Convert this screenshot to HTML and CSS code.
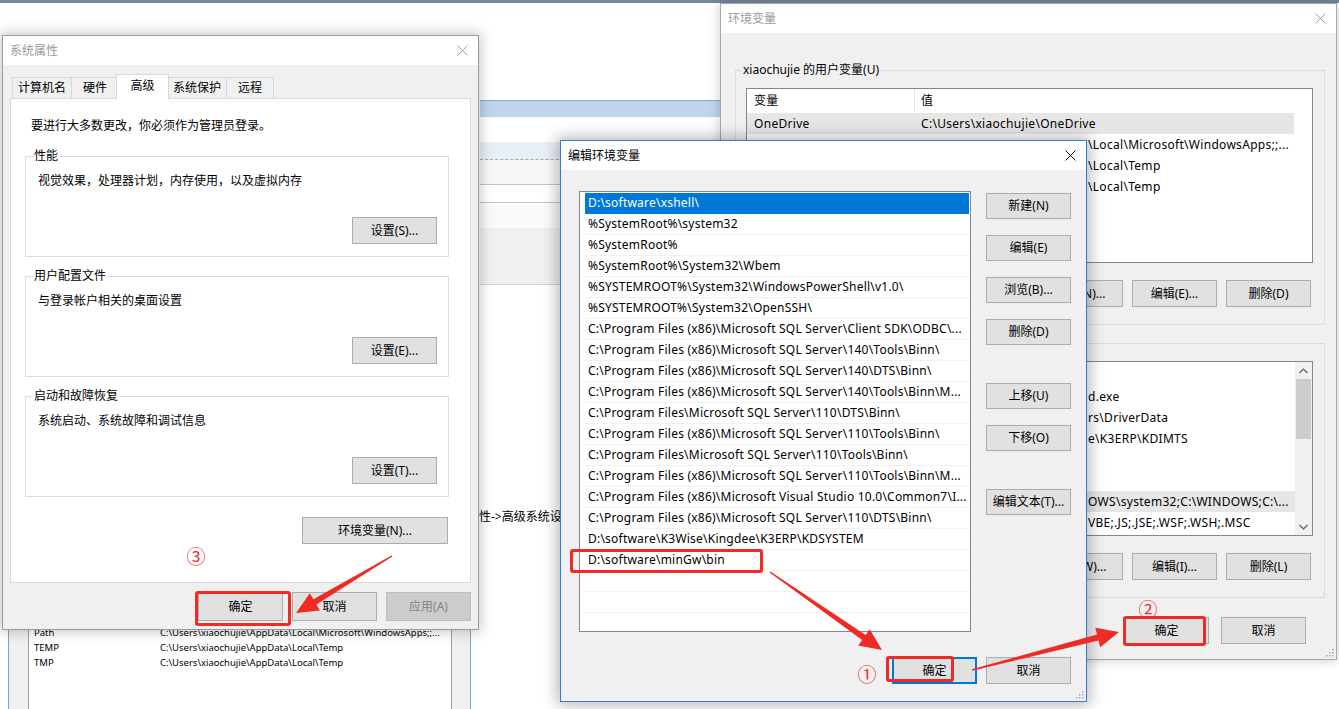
FILE: index.html
```html
<!DOCTYPE html>
<html lang="zh-CN">
<head>
<meta charset="utf-8">
<title>环境变量</title>
<link rel="stylesheet" href="styles.css">
</head>
<body>
<div class="desk">

  <!-- background window behind everything -->
  <div class="bgwin">
    <div class="bg-col">
      <div class="bs bs-white1"></div>
      <div class="bs bs-sel"></div>
      <div class="bs bs-white2"></div>
      <div class="bs bs-hl"></div>
      <div class="bs bs-r1"></div>
      <div class="bs bs-r2"></div>
      <div class="bs bs-r3"></div>
      <div class="bs bs-grey"></div>
      <div class="bs bs-white3"><span class="bg-path">性-&gt;高级系统设</span></div>
    </div>
  </div>

  <!-- background env window (bottom left) -->
  <div class="bgenv">
    <div class="bg-list">
      <div class="bg-row"></div>
      <div class="bg-row"><span class="bg-name">Path</span><span>C:\Users\xiaochujie\AppData\Local\Microsoft\WindowsApps;;...</span></div>
      <div class="bg-row"><span class="bg-name">TEMP</span><span>C:\Users\xiaochujie\AppData\Local\Temp</span></div>
      <div class="bg-row"><span class="bg-name">TMP</span><span>C:\Users\xiaochujie\AppData\Local\Temp</span></div>
    </div>
  </div>

  <!-- 系统属性 -->
  <div class="win win-sys">
    <div class="tb">
      <span class="tb-title dim">系统属性</span>
      <svg class="xicon dim" width="11" height="11" viewBox="0 0 11 11"><path d="M0.5 0.5L10.5 10.5M10.5 0.5L0.5 10.5" stroke="currentColor" stroke-width="1"/></svg>
    </div>
    <div class="sys-body">
      <div class="tabs">
        <div class="tab">计算机名</div>
        <div class="tab">硬件</div>
        <div class="tab sel">高级</div>
        <div class="tab">系统保护</div>
        <div class="tab">远程</div>
      </div>
      <div class="panel">
        <p class="note">要进行大多数更改，你必须作为管理员登录。</p>
        <fieldset class="grp">
          <legend>性能</legend>
          <p class="grp-text">视觉效果，处理器计划，内存使用，以及虚拟内存</p>
          <div class="grp-act"><button class="btn">设置(S)...</button></div>
        </fieldset>
        <fieldset class="grp">
          <legend>用户配置文件</legend>
          <p class="grp-text">与登录帐户相关的桌面设置</p>
          <div class="grp-act"><button class="btn">设置(E)...</button></div>
        </fieldset>
        <fieldset class="grp">
          <legend>启动和故障恢复</legend>
          <p class="grp-text">系统启动、系统故障和调试信息</p>
          <div class="grp-act"><button class="btn">设置(T)...</button></div>
        </fieldset>
        <div class="env-act"><button class="btn btn-env">环境变量(N)...</button></div>
      </div>
      <div class="foot foot-sys">
        <button class="btn btn-foot">确定</button>
        <button class="btn btn-foot">取消</button>
        <button class="btn btn-foot" disabled>应用(A)</button>
      </div>
    </div>
  </div>

  <!-- 环境变量 -->
  <div class="win win-env">
    <div class="tb">
      <span class="tb-title dim">环境变量</span>
      <svg class="xicon dim" width="11" height="11" viewBox="0 0 11 11"><path d="M0.5 0.5L10.5 10.5M10.5 0.5L0.5 10.5" stroke="currentColor" stroke-width="1"/></svg>
    </div>
    <div class="env-body">
      <fieldset class="grp grp-env">
        <legend>xiaochujie 的用户变量(U)</legend>
        <div class="lv">
          <div class="lv-main">
            <div class="lv-head"><span class="c-name">变量</span><span class="c-val">值</span></div>
            <div class="lv-row hl"><span class="c-name">OneDrive</span><span class="c-val">C:\Users\xiaochujie\OneDrive</span></div>
            <div class="lv-row"><span class="tail">\Local\Microsoft\WindowsApps;;...</span></div>
            <div class="lv-row"><span class="tail">\Local\Temp</span></div>
            <div class="lv-row"><span class="tail">\Local\Temp</span></div>
          </div>
        </div>
        <div class="grp-btns">
          <button class="btn btn-foot">新建(N)...</button>
          <button class="btn btn-foot">编辑(E)...</button>
          <button class="btn btn-foot">删除(D)</button>
        </div>
      </fieldset>
      <fieldset class="grp grp-env grp-sys">
        <div class="lv">
          <div class="lv-main">
            <div class="lv-head"></div>
            <div class="lv-row"><span class="tail">d.exe</span></div>
            <div class="lv-row"><span class="tail">rs\DriverData</span></div>
            <div class="lv-row"><span class="tail">e\K3ERP\KDIMTS</span></div>
            <div class="lv-row"></div>
            <div class="lv-row"></div>
            <div class="lv-row hl"><span class="tail">OWS\system32;C:\WINDOWS;C:\...</span></div>
            <div class="lv-row"><span class="tail">VBE;.JS;.JSE;.WSF;.WSH;.MSC</span></div>
          </div>
          <div class="sb">
            <div class="sb-btn"><svg width="9" height="6" viewBox="0 0 9 6"><path d="M0.5 5L4.5 1L8.5 5" fill="none" stroke="#606060" stroke-width="1.2"/></svg></div>
            <div class="sb-thumb"></div>
            <div class="sb-track"></div>
            <div class="sb-btn"><svg width="9" height="6" viewBox="0 0 9 6"><path d="M0.5 1L4.5 5L8.5 1" fill="none" stroke="#606060" stroke-width="1.2"/></svg></div>
          </div>
        </div>
        <div class="grp-btns">
          <button class="btn btn-foot">新建(W)...</button>
          <button class="btn btn-foot">编辑(I)...</button>
          <button class="btn btn-foot">删除(L)</button>
        </div>
      </fieldset>
      <div class="foot foot-env">
        <button class="btn btn-foot">确定</button>
        <button class="btn btn-foot">取消</button>
      </div>
    </div>
    <svg class="grip" width="10" height="10" viewBox="0 0 10 10"><g fill="#a8a8a8"><rect x="8" y="2" width="1.5" height="1.5"/><rect x="8" y="5" width="1.5" height="1.5"/><rect x="5" y="5" width="1.5" height="1.5"/><rect x="8" y="8" width="1.5" height="1.5"/><rect x="5" y="8" width="1.5" height="1.5"/><rect x="2" y="8" width="1.5" height="1.5"/></g></svg>
  </div>

  <!-- 编辑环境变量 -->
  <div class="win win-edit">
    <div class="tb">
      <span class="tb-title">编辑环境变量</span>
      <svg class="xicon" width="11" height="11" viewBox="0 0 11 11"><path d="M0.5 0.5L10.5 10.5M10.5 0.5L0.5 10.5" stroke="currentColor" stroke-width="1"/></svg>
    </div>
    <div class="edit-body">
      <div class="edit-main">
        <div class="plist">
          <div class="pitem sel">D:\software\xshell\</div>
          <div class="pitem">%SystemRoot%\system32</div>
          <div class="pitem">%SystemRoot%</div>
          <div class="pitem">%SystemRoot%\System32\Wbem</div>
          <div class="pitem">%SYSTEMROOT%\System32\WindowsPowerShell\v1.0\</div>
          <div class="pitem">%SYSTEMROOT%\System32\OpenSSH\</div>
          <div class="pitem">C:\Program Files (x86)\Microsoft SQL Server\Client SDK\ODBC\...</div>
          <div class="pitem">C:\Program Files (x86)\Microsoft SQL Server\140\Tools\Binn\</div>
          <div class="pitem">C:\Program Files (x86)\Microsoft SQL Server\140\DTS\Binn\</div>
          <div class="pitem">C:\Program Files (x86)\Microsoft SQL Server\140\Tools\Binn\M...</div>
          <div class="pitem">C:\Program Files\Microsoft SQL Server\110\DTS\Binn\</div>
          <div class="pitem">C:\Program Files (x86)\Microsoft SQL Server\110\Tools\Binn\</div>
          <div class="pitem">C:\Program Files\Microsoft SQL Server\110\Tools\Binn\</div>
          <div class="pitem">C:\Program Files (x86)\Microsoft SQL Server\110\Tools\Binn\M...</div>
          <div class="pitem">C:\Program Files (x86)\Microsoft Visual Studio 10.0\Common7\I...</div>
          <div class="pitem">C:\Program Files (x86)\Microsoft SQL Server\110\DTS\Binn\</div>
          <div class="pitem">D:\software\K3Wise\Kingdee\K3ERP\KDSYSTEM</div>
          <div class="pitem">D:\software\minGw\bin</div>
          <div class="pitem"></div>
          <div class="pitem"></div>
          <div class="pitem"></div>
        </div>
        <div class="side">
          <button class="btn">新建(N)</button>
          <button class="btn gap-s">编辑(E)</button>
          <button class="btn gap-s">浏览(B)...</button>
          <button class="btn gap-s">删除(D)</button>
          <button class="btn gap-l">上移(U)</button>
          <button class="btn gap-s">下移(O)</button>
          <button class="btn gap-l">编辑文本(T)...</button>
        </div>
      </div>
      <div class="foot foot-edit">
        <button class="btn btn-foot btn-def">确定</button>
        <button class="btn btn-foot">取消</button>
      </div>
    </div>
    <svg class="grip" width="10" height="10" viewBox="0 0 10 10"><g fill="#a8a8a8"><rect x="8" y="2" width="1.5" height="1.5"/><rect x="8" y="5" width="1.5" height="1.5"/><rect x="5" y="5" width="1.5" height="1.5"/><rect x="8" y="8" width="1.5" height="1.5"/><rect x="5" y="8" width="1.5" height="1.5"/><rect x="2" y="8" width="1.5" height="1.5"/></g></svg>
  </div>

  <!-- annotations -->
  <svg class="arrows" width="1339" height="709" viewBox="0 0 1339 709">
    <g fill="#ee2b24">
      <polygon points="391.6,555.4 313.4,599.2 309.8,593.2 296,613 320.0,610.4 316.4,604.4 392.4,556.6"/>
      <polygon points="769.6,572.6 862.2,639.9 858.2,645.6 882,650 869.7,629.2 865.7,635.0 770.4,571.4"/>
      <polygon points="972.2,670.7 1098.5,640.4 1100.2,647.2 1119,632 1095.2,627.8 1097.0,634.6 971.8,669.3"/>
    </g>
  </svg>
  <div class="mark mark-sys"></div>
  <div class="mark mark-path"></div>
  <div class="mark mark-edit"></div>
  <div class="mark mark-env"></div>
  <span class="num num3">③</span>
  <span class="num num1">①</span>
  <span class="num num2">②</span>
</div>
</body>
</html>
```

FILE: styles.css
```css
* { box-sizing: border-box; }

html, body {
  margin: 0;
  padding: 0;
}

body {
  width: 1339px;
  height: 709px;
  overflow: hidden;
  background: #ffffff;
  font-family: "Noto Sans", "Noto Sans CJK SC", sans-serif;
  font-size: 12px;
  line-height: 16px;
  color: #000000;
}

.desk {
  position: relative;
  width: 1339px;
  height: 709px;
  overflow: hidden;
}

/* ---------- background window ---------- */
.bgwin {
  position: absolute;
  left: 0;
  top: 0;
  width: 1339px;
  height: 709px;
  border-top: 3px solid #76869f;
  background: #ffffff;
  padding-left: 480px;
}

.bg-col {
  width: 240px;
  display: flex;
  flex-direction: column;
}

.bs { flex: none; }
.bs-white1 { height: 97px; background: #ffffff; }
.bs-sel { height: 17px; background: #c0d4ed; border-top: 1px solid #8ea8cb; }
.bs-white2 { height: 25px; background: #ffffff; }
.bs-hl { height: 18px; background: #e9eff8; border-bottom: 1px dashed #a9a9a9; }
.bs-r1 { height: 25px; background: #f8f8f8; border-bottom: 1px solid #c4c4c4; }
.bs-r2 { height: 18px; background: #ffffff; border-bottom: 1px solid #c4c4c4; }
.bs-r3 { height: 25px; background: #fafafa; }
.bs-grey { height: 57px; background: #f0f0f0; border-bottom: 1px solid #d2d2d2; }
.bs-white3 { height: 424px; background: #ffffff; padding-top: 224px; }

.bg-path {
  display: block;
  white-space: nowrap;
  font-size: 12px;
  margin-left: -1px;
}

.bgenv {
  position: absolute;
  left: 8px;
  top: 601px;
  width: 463px;
  height: 120px;
  background: #f0f0f0;
  border-left: 1px solid #7fa3cf;
  border-right: 1px solid #7fa3cf;
  padding: 8px 0 0 19px;
}

.bg-list {
  width: 424px;
  height: 120px;
  background: #ffffff;
  border: 1px solid #a0a0a0;
  font-size: 9.5px;
  line-height: 15px;
}

.bg-row {
  display: flex;
  white-space: nowrap;
  height: 15px;
}

.bg-name {
  width: 131px;
  padding-left: 5px;
  flex: none;
}

/* ---------- windows ---------- */
.win {
  position: absolute;
  background: #f0f0f0;
  display: flex;
  flex-direction: column;
}

.tb {
  flex: none;
  height: 29px;
  background: #ffffff;
  display: flex;
  align-items: center;
  justify-content: space-between;
  padding: 0 10px 0 7px;
}

.tb-title { white-space: nowrap; }
.dim { color: #9a9a9a; }
.xicon { color: #111111; flex: none; }
.xicon.dim { color: #a0a0a0; }

.grip {
  position: absolute;
  right: 2px;
  bottom: 2px;
}

/* buttons */
.btn {
  font-family: inherit;
  font-size: 12px;
  line-height: 16px;
  color: #000000;
  background: #e1e1e1;
  border: 1px solid #adadad;
  height: 27px;
  width: 85px;
  padding: 0;
  margin: 0;
  white-space: nowrap;
  flex: none;
}

.btn:disabled {
  background: #cccccc;
  border-color: #bfbfbf;
  color: #838383;
}

.btn-def {
  border: 2px solid #0078d7;
}

.foot {
  display: flex;
  justify-content: flex-end;
  flex: none;
}

/* ---------- 系统属性 ---------- */
.win-sys {
  left: 2px;
  top: 35px;
  width: 477px;
  height: 595px;
  border: 1px solid #9b9b9b;
  box-shadow: 0 0 12px 2px rgba(0, 0, 0, 0.22);
}

.sys-body {
  flex: 1;
  display: flex;
  flex-direction: column;
  padding: 9px 7px 0 7px;
}

.tabs {
  display: flex;
  align-items: flex-end;
  height: 24px;
  margin-left: 2px;
  position: relative;
  z-index: 1;
}

.tab {
  height: 21px;
  min-width: 48px;
  padding: 0 5px;
  line-height: 20px;
  text-align: center;
  border: 1px solid #d9d9d9;
  border-bottom: none;
  margin-right: -1px;
  background: #f0f0f0;
  white-space: nowrap;
}

.tab.sel {
  height: 25px;
  min-width: 53px;
  line-height: 21px;
  background: #ffffff;
  margin: 0 -2px -1px -2px;
  position: relative;
  z-index: 2;
}

.panel {
  height: 485px;
  background: #ffffff;
  border: 1px solid #d9d9d9;
  padding: 19px 21px 0 14px;
  flex: none;
}

.note {
  margin: 0 0 0 6px;
}

.grp {
  margin: 14px 0 0 0;
  border: 1px solid #dcdcdc;
  padding: 0 11px 12px 12px;
  min-width: 0;
}

.grp + .grp { margin-top: 11px; }

.grp legend {
  padding: 0 1px;
  margin-left: -5px;
  line-height: 16px;
  white-space: nowrap;
}

.grp-text {
  margin: 9px 0 0 0;
}

.grp-act {
  display: flex;
  justify-content: flex-end;
  margin-top: 28px;
}

.env-act {
  display: flex;
  justify-content: flex-end;
  margin-top: 20px;
  padding-right: 1px;
}

.btn-env { width: 146px; }

.foot-sys {
  margin-top: 9px;
  gap: 9px;
}

.btn-foot { width: 85px; }
.foot-sys .btn-foot { height: 29px; }

/* ---------- 环境变量 ---------- */
.win-env {
  left: 720px;
  top: 3px;
  width: 617px;
  height: 657px;
  border: 1px solid #a7a7a7;
  box-shadow: 0 0 10px 1px rgba(0, 0, 0, 0.18);
}

.env-body {
  flex: 1;
  display: flex;
  flex-direction: column;
  padding: 29px 11px 0 14px;
}

.grp-env {
  margin: 0;
  padding: 0 11px 17px 10px;
}

.grp-env legend { margin-left: -4px; }

.grp-env + .grp-sys { margin-top: 18px; }

.lv {
  margin-top: 10px;
  height: 175px;
  background: #ffffff;
  border: 1px solid #828790;
  display: flex;
  overflow: hidden;
  letter-spacing: 0.3px;
}

.grp-sys .lv { margin-top: 17px; }

.lv-main {
  width: 547px;
  flex: none;
  white-space: nowrap;
}

.grp-sys .lv-main { width: 548px; }

.lv-head {
  height: 24px;
  display: flex;
  align-items: center;
}

.lv-head .c-name {
  border-right: 1px solid #e5e5e5;
  height: 24px;
  line-height: 24px;
}

.lv-row {
  height: 21px;
  display: flex;
  align-items: center;
}

.lv-row.hl { background: #e6e6e6; }

.c-name {
  width: 168px;
  padding-left: 7px;
  flex: none;
}

.c-val {
  padding-left: 6px;
}

.tail {
  margin-left: 341px;
}

.sb {
  width: 17px;
  flex: none;
  display: flex;
  flex-direction: column;
  background: #f0f0f0;
  margin-left: auto;
}

.sb-btn {
  height: 17px;
  display: flex;
  align-items: center;
  justify-content: center;
  flex: none;
}

.sb-thumb {
  height: 60px;
  margin: 0 1px;
  background: #cdcdcd;
  flex: none;
}

.sb-track { flex: 1; }

.grp-btns {
  display: flex;
  justify-content: flex-end;
  gap: 9px;
  margin-top: 17px;
  padding-right: 2px;
}

.foot-env {
  margin-top: 19px;
  gap: 12px;
  padding-right: 19px;
}

/* ---------- 编辑环境变量 ---------- */
.win-edit {
  left: 560px;
  top: 140px;
  width: 527px;
  height: 562px;
  border: 1px solid #2b7dd6;
  box-shadow: 0 0 14px 3px rgba(0, 0, 0, 0.28);
}

.edit-body {
  flex: 1;
  display: flex;
  flex-direction: column;
  padding: 21px 15px 0 18px;
}

.edit-main {
  display: flex;
}

.plist {
  width: 392px;
  height: 441px;
  background: #ffffff;
  border: 1px solid #828790;
  padding: 1px 1px 0 5px;
  overflow: hidden;
  flex: none;
}

.pitem {
  height: 21px;
  line-height: 20px;
  padding-left: 3px;
  border-bottom: 1px solid #f0f0f0;
  white-space: nowrap;
  overflow: hidden;
  letter-spacing: 0.22px;
}

.pitem.sel {
  background: #0078d7;
  color: #ffffff;
  border-bottom-color: #0078d7;
}

.side {
  margin-left: 15px;
  display: flex;
  flex-direction: column;
  padding-top: 2px;
}

.side .btn { height: 26px; }
.gap-s { margin-top: 16px; }
.gap-l { margin-top: 38px; }

.foot-edit {
  margin-top: 25px;
  gap: 9px;
}

/* ---------- annotations ---------- */
.arrows {
  position: absolute;
  left: 0;
  top: 0;
  pointer-events: none;
}

.mark {
  position: absolute;
  border: 3px solid #ee2b24;
  border-radius: 3px;
}

.mark-sys { left: 195px; top: 591px; width: 96px; height: 35px; }
.mark-path { left: 570px; top: 549px; width: 193px; height: 24px; }
.mark-edit { left: 886px; top: 656px; width: 68px; height: 26px; }
.mark-env { left: 1123px; top: 616px; width: 83px; height: 30px; }

.num {
  position: absolute;
  width: 22px;
  height: 22px;
  line-height: 22px;
  text-align: center;
  font-family: "Noto Sans CJK SC", sans-serif;
  font-size: 19px;
  color: #ee2b24;
}

.num3 { left: 185px; top: 545px; }
.num1 { left: 856px; top: 663px; }
.num2 { left: 1137px; top: 598px; }
```
